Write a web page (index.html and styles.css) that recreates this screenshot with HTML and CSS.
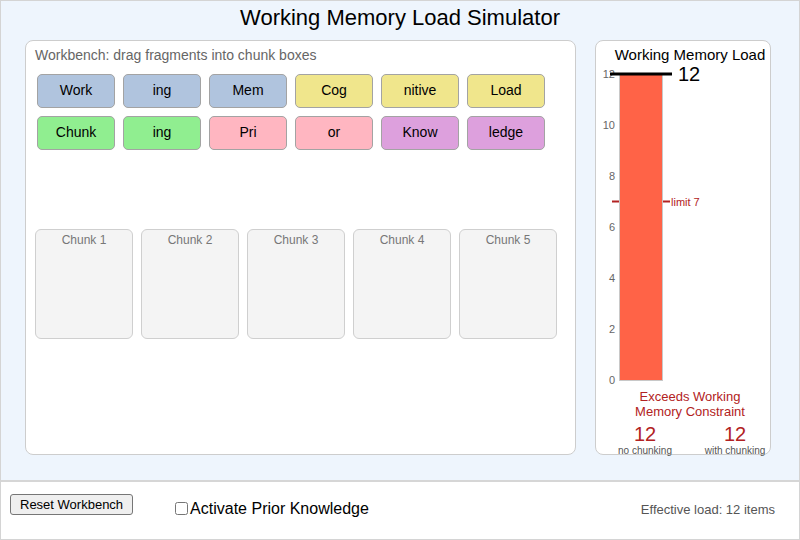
FILE: index.html
```html
<!DOCTYPE html>
<html lang="en">
<head>
    <meta charset="UTF-8">
    <meta name="viewport" content="width=device-width, initial-scale=1.0">
    <title>Working Memory Load Simulator</title>
    <link rel="stylesheet" href="styles.css">
</head>
<body>
<div class="app">
    <div class="main">
        <h1 class="title">Working Memory Load Simulator</h1>
        <div class="panels">
            <div class="panel workbench">
                <div class="wb-label">Workbench: drag fragments into chunk boxes</div>
                <div class="fragments">
                    <div class="frag blue">Work</div>
                    <div class="frag blue">ing</div>
                    <div class="frag blue">Mem</div>
                    <div class="frag yellow">Cog</div>
                    <div class="frag yellow">nitive</div>
                    <div class="frag yellow">Load</div>
                    <div class="frag green">Chunk</div>
                    <div class="frag green">ing</div>
                    <div class="frag pink">Pri</div>
                    <div class="frag pink">or</div>
                    <div class="frag purple">Know</div>
                    <div class="frag purple">ledge</div>
                </div>
                <div class="chunks">
                    <div class="chunk">Chunk 1</div>
                    <div class="chunk">Chunk 2</div>
                    <div class="chunk">Chunk 3</div>
                    <div class="chunk">Chunk 4</div>
                    <div class="chunk">Chunk 5</div>
                </div>
            </div>

            <div class="panel meter">
                <div class="meter-title">Working Memory Load</div>
                <svg class="chart" width="174" height="325" viewBox="0 0 174 325">
                    <g class="ticks" font-size="11" fill="#666" text-anchor="end">
                        <text x="19" y="320">0</text>
                        <text x="19" y="269">2</text>
                        <text x="19" y="218">4</text>
                        <text x="19" y="167">6</text>
                        <text x="19" y="116">8</text>
                        <text x="19" y="65">10</text>
                        <text x="19" y="14">12</text>
                    </g>
                    <rect x="23.5" y="10.5" width="43" height="306" fill="#ff6347" stroke="#c8c8c8" stroke-width="1"/>
                    <line x1="16" y1="137.5" x2="23" y2="137.5" stroke="#b22222" stroke-width="2"/>
                    <line x1="67" y1="137.5" x2="74" y2="137.5" stroke="#b22222" stroke-width="2"/>
                    <text x="75" y="141.5" font-size="11" fill="#b22222">limit 7</text>
                    <line x1="14" y1="10" x2="76" y2="10" stroke="#000" stroke-width="3"/>
                    <text x="82" y="17" font-size="20" fill="#000">12</text>
                </svg>
                <div class="status">Exceeds Working<br>Memory Constraint</div>
                <div class="stats">
                    <div class="stat">
                        <div class="stat-num">12</div>
                        <div class="stat-label">no chunking</div>
                    </div>
                    <div class="stat">
                        <div class="stat-num">12</div>
                        <div class="stat-label">with chunking</div>
                    </div>
                </div>
            </div>
        </div>
    </div>

    <div class="controls">
        <button class="reset-btn">Reset Workbench</button>
        <label class="prior"><input type="checkbox">Activate Prior Knowledge</label>
        <div class="effective">Effective load: 12 items</div>
    </div>
</div>
</body>
</html>
```
FILE: styles.css
```css
body {
    margin: 0;
    padding: 0;
    font-family: 'Liberation Sans', Arial, sans-serif;
    color: #000;
}

.app {
    width: 800px;
    height: 540px;
    box-sizing: border-box;
    border: 1px solid #d4d4d4;
    display: flex;
    flex-direction: column;
}

.main {
    height: 481px;
    flex-shrink: 0;
    box-sizing: border-box;
    background-color: #eef5fd;
    border-bottom: 2px solid #d6d6d6;
}

.title {
    margin: 0;
    padding: 4px 0 9px 0;
    font-size: 22px;
    line-height: 26px;
    font-weight: normal;
    text-align: center;
}

.panels {
    display: grid;
    grid-template-columns: 551px 176px;
    column-gap: 19px;
    padding-left: 24px;
}

.panel {
    height: 415px;
    box-sizing: border-box;
    background-color: #fff;
    border: 1px solid #cdcdcd;
    border-radius: 8px;
}

.workbench {
    padding: 5px 9px 0 9px;
}

.wb-label {
    font-size: 14px;
    line-height: 18px;
    color: #666;
}

.fragments {
    display: grid;
    grid-template-columns: repeat(6, 78px);
    grid-auto-rows: 34px;
    gap: 8px;
    align-content: start;
    height: 155px;
    margin: 10px 0 0 2px;
}

.frag {
    display: flex;
    align-items: center;
    justify-content: center;
    box-sizing: border-box;
    border: 1px solid #a3a3a3;
    border-radius: 5px;
    padding-bottom: 2px;
    font-size: 14px;
}

.blue { background-color: #b0c4de; }
.yellow { background-color: #f0e68c; }
.green { background-color: #90ee90; }
.pink { background-color: #ffb6c1; }
.purple { background-color: #dda0dd; }

.chunks {
    display: flex;
    gap: 8px;
}

.chunk {
    width: 98px;
    height: 110px;
    box-sizing: border-box;
    background-color: #f4f4f4;
    border: 1px solid #cfcfcf;
    border-radius: 6px;
    padding-top: 3px;
    text-align: center;
    font-size: 12px;
    line-height: 14px;
    color: #777;
}

.meter {
    padding-top: 5px;
}

.meter-title {
    font-size: 15px;
    line-height: 18px;
    text-align: center;
    padding-left: 14px;
}

.chart {
    display: block;
    overflow: visible;
    font-family: 'Liberation Sans', Arial, sans-serif;
}

.status {
    font-size: 13px;
    line-height: 15px;
    color: #b22222;
    text-align: center;
    padding-left: 14px;
}

.stats {
    display: flex;
    padding-left: 4px;
    margin-top: 4px;
}

.stat {
    flex: 0 0 90px;
    text-align: center;
}

.stat-num {
    font-size: 20px;
    line-height: 22px;
    color: #b22222;
}

.stat-label {
    font-size: 10px;
    line-height: 12px;
    color: #555;
}

.controls {
    flex: 1;
    display: flex;
    align-items: center;
    padding: 0 24px 0 9px;
}

.reset-btn {
    font-family: 'Liberation Sans', Arial, sans-serif;
    font-size: 13px;
    height: 21px;
    padding: 0 9px;
    margin-bottom: 13px;
    background-color: #efefef;
    border: 1px solid #767676;
    border-radius: 3px;
    color: #000;
}

.prior {
    display: flex;
    align-items: center;
    margin-left: 42px;
    margin-bottom: 4px;
    font-size: 16px;
}

.prior input {
    width: 13px;
    height: 13px;
    margin: 0 2px 0 0;
}

.effective {
    margin-left: auto;
    margin-bottom: 2px;
    font-size: 13px;
    color: #555;
}
```
